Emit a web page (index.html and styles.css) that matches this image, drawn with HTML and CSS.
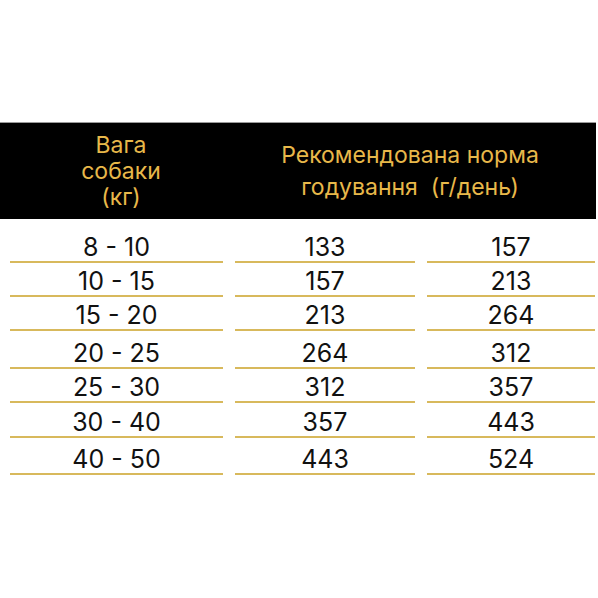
FILE: index.html
```html
<!DOCTYPE html>
<html lang="uk">
<head>
<meta charset="utf-8">
<title>Норма годування</title>
<link rel="stylesheet" href="styles.css">
</head>
<body>
<div class="page">
  <div class="head">
    <div class="head-left">Вага<br>собаки<br>(кг)</div>
    <div class="head-right">Рекомендована норма<br>годування&nbsp; (г/день)</div>
  </div>
  <div class="rows">
    <div class="cell">8 - 10</div><div class="cell">133</div><div class="cell">157</div>
    <div class="cell">10 - 15</div><div class="cell">157</div><div class="cell">213</div>
    <div class="cell">15 - 20</div><div class="cell">213</div><div class="cell">264</div>
    <div class="cell">20 - 25</div><div class="cell">264</div><div class="cell">312</div>
    <div class="cell">25 - 30</div><div class="cell">312</div><div class="cell">357</div>
    <div class="cell">30 - 40</div><div class="cell">357</div><div class="cell">443</div>
    <div class="cell">40 - 50</div><div class="cell">443</div><div class="cell">524</div>
  </div>
</div>
</body>
</html>
```
FILE: styles.css
```css
html, body {
  margin: 0;
  padding: 0;
  background: #fff;
}
.page {
  width: 598px;
  height: 598px;
  padding-top: 122px;
  box-sizing: border-box;
  font-family: "Inter", "Liberation Sans", sans-serif;
}
.head {
  width: 596px;
  height: 97px;
  background: #000;
  border-top: 1px solid #9a9a9a;
  box-sizing: border-box;
  display: grid;
  grid-template-columns: 242px 336px;
  align-items: center;
  color: #e8b84a;
  font-size: 23px;
  text-align: center;
}
.head-left {
  line-height: 26px;
}
.head-right {
  line-height: 32px;
}
.rows {
  display: grid;
  grid-template-columns: 213px 180px 168px;
  grid-template-rows: 44px 34px 34px 38px 34px 35px 37px;
  column-gap: 12px;
  padding-left: 10px;
}
.cell {
  border-bottom: 2px solid #d8b95c;
  display: flex;
  align-items: flex-end;
  justify-content: center;
  font-size: 25px;
  line-height: 25px;
  padding-bottom: 1px;
  color: #111;
}
```
